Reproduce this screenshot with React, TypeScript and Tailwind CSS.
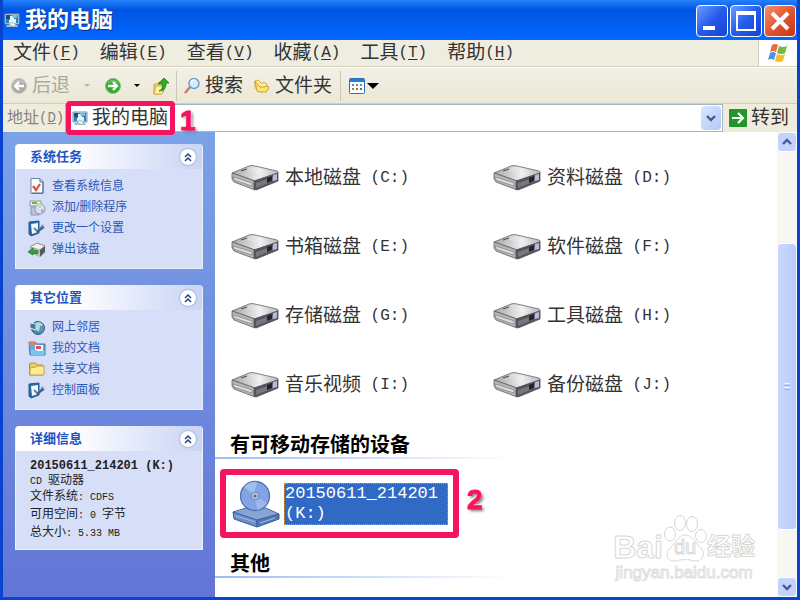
import type { ReactNode } from "react"

const menus = [
  { label: "文件", hotkey: "F" },
  { label: "编辑", hotkey: "E" },
  { label: "查看", hotkey: "V" },
  { label: "收藏", hotkey: "A" },
  { label: "工具", hotkey: "T" },
  { label: "帮助", hotkey: "H" },
]

const drives = [
  { name: "本地磁盘", letter: "C" },
  { name: "资料磁盘", letter: "D" },
  { name: "书箱磁盘", letter: "E" },
  { name: "软件磁盘", letter: "F" },
  { name: "存储磁盘", letter: "G" },
  { name: "工具磁盘", letter: "H" },
  { name: "音乐视频", letter: "I" },
  { name: "备份磁盘", letter: "J" },
]

const tasks = [
  { label: "查看系统信息", icon: <InfoIcon /> },
  { label: "添加/删除程序", icon: <ProgramsIcon /> },
  { label: "更改一个设置", icon: <SettingsIcon /> },
  { label: "弹出该盘", icon: <EjectIcon /> },
]

const places = [
  { label: "网上邻居", icon: <NetworkIcon /> },
  { label: "我的文档", icon: <DocumentsIcon /> },
  { label: "共享文档", icon: <FolderIcon /> },
  { label: "控制面板", icon: <SettingsIcon /> },
]

function ComputerIcon() {
  return (
    <svg viewBox="0 0 16 16" className="size-4 shrink-0">
      <path d="M1 2h14v10H1z" fill="#d9e5ee" stroke="#7591a5" />
      <path d="M2 3h12v8H2z" fill="#2a83b8" />
      <path d="M2 3h4v4H2z" fill="#174e7e" />
      <path d="M6 4h4v3h2v4H5V8h1z" fill="#e4f6fc" />
      <path d="M8 3h5v3H9z" fill="#64c5e8" />
      <path d="M3 13h10l1 2H2z" fill="#acc0cd" />
      <path d="m7 10 5 2-2 3-5-2z" fill="#e8eef0" stroke="#718a96" strokeWidth=".5" />
    </svg>
  )
}

function RoundArrow({ direction }: { direction: "left" | "right" }) {
  const back = direction === "left"
  return (
    <svg viewBox="0 0 18 18" className="size-[18px] shrink-0">
      <circle cx="9" cy="9" r="7.5" fill={back ? "#aaaaa7" : "#34a92c"} stroke={back ? "#c9c8c4" : "#82c377"} />
      <path d="M3 7a6.5 6.5 0 0 1 12 0Q9 3 3 7" fill="#fff" opacity=".3" />
      <path d={back ? "M14 9H5m4-4L5 9l4 4" : "M4 9h9M9 5l4 4-4 4"} fill="none" stroke="#fff" strokeWidth="2.4" />
    </svg>
  )
}

function UpFolderIcon() {
  return (
    <svg viewBox="0 0 18 18" className="size-[18px]">
      <path d="M2 7h4l1-2 5 1v8l-3 3H2z" fill="#f3db6d" stroke="#c9a540" />
      <path d="M4 9h9l-3 8H2z" fill="#fff3a6" stroke="#d3ad41" />
      <path d="M7 14c3-1 4-4 3-7H6l6-6 5 5h-3c0 5-2 8-7 8" fill="#36a91d" stroke="#157a20" strokeWidth=".8" />
    </svg>
  )
}

function SearchIcon() {
  return (
    <svg viewBox="0 0 18 18" className="size-[18px]">
      <path d="m2 16 5-6" stroke="#c5816e" strokeWidth="2.5" />
      <circle cx="11" cy="6.5" r="5" fill="#cdefff" stroke="#6b9ac8" strokeWidth="1.4" />
      <path d="M8 6c0-2 2-3 4-3" fill="none" stroke="#fff" strokeWidth="1.5" />
    </svg>
  )
}

function FolderIcon() {
  return (
    <svg viewBox="0 0 18 18" className="size-[18px] shrink-0">
      <path d="M1.5 15V4l1-1h5l2 2h5l1 2v8z" fill="#f2cd5b" stroke="#b58b30" />
      <path d="M2 15V8l6-1 1-1h7v8l-1 1z" fill="#ffec90" stroke="#d0a13b" />
    </svg>
  )
}

function OpenFolderIcon() {
  return (
    <svg viewBox="0 0 18 18" className="size-[18px]">
      <path d="M2 12V4l3-1 3 3h5l1 3" fill="#fff2a3" stroke="#d4a83b" />
      <path d="m2 4 2 10 3 1h6l3-4-1-2-4 1H7z" fill="#ffe371" stroke="#cf9b2d" />
    </svg>
  )
}

function ViewsIcon() {
  return (
    <svg viewBox="0 0 16 16" className="size-4">
      <rect x=".5" y=".5" width="15" height="15" rx="1" fill="#fff" stroke="#276fbb" />
      <path d="M1 1h14v3H1z" fill="#277bd8" />
      <path d="M3 6h2v2H3zm4 0h2v2H7z" fill="#6287c1" />
      <path d="M11 6h2v2h-2zm-8 4h2v2H3z" fill="#619d56" />
      <path d="M7 10h2v2H7z" fill="#cb5b44" />
      <path d="M11 10h2v2h-2z" fill="#4f69b5" />
    </svg>
  )
}

function WindowsFlag() {
  return (
    <svg viewBox="0 0 22 20" className="h-5 w-[22px]">
      <path d="M5 2q4-2 6 0L9 9Q6 7 3 9z" fill="#ee6b36" />
      <path d="M12 3q4 2 8 0l-2 7q-4 2-8 0z" fill="#76b840" />
      <path d="M3 10q3-2 6 0l-2 7q-3-2-6 0z" fill="#4f91db" />
      <path d="M10 11q4 2 8 0l-2 7q-4 2-8 0z" fill="#f5be2e" />
    </svg>
  )
}

function InfoIcon() {
  return (
    <svg viewBox="0 0 18 18" className="size-[18px] shrink-0">
      <path d="M3 1.5h9l3 3v12H3z" fill="#fafdff" stroke="#7183a4" />
      <path d="M12 2v3h3v11H4" fill="none" stroke="#53678b" />
      <path d="m5 9 3 4 4-6" fill="none" stroke="#dc5136" strokeWidth="2.2" />
    </svg>
  )
}

function ProgramsIcon() {
  return (
    <svg viewBox="0 0 18 18" className="size-[18px] shrink-0">
      <path d="M2 3h11v5H2z" fill="#e9f0ed" stroke="#8998a3" />
      <path d="M4 5h5" stroke="#6faa55" strokeWidth="2" />
      <path d="M3 9h8v8H3z" fill="#b7c5dc" stroke="#8197ba" />
      <circle cx="12" cy="11" r="5" fill="#dce3ee" stroke="#8996ac" />
      <path d="m12 11-3-4a5 5 0 0 1 5-1z" fill="#c8e2af" />
      <path d="m12 11 5 1a5 5 0 0 1-3 4z" fill="#b4a2d3" />
      <circle cx="12" cy="11" r="1.5" fill="#fff" stroke="#9da4b4" strokeWidth=".5" />
    </svg>
  )
}

function SettingsIcon() {
  return (
    <svg viewBox="0 0 18 18" className="size-[18px] shrink-0">
      <path d="m1 3 10-1v12l-8 3-2-2z" fill="#2c68a5" stroke="#285888" />
      <path d="m3 5 7-1v9l-6 2z" fill="#edf8ff" />
      <path d="m6 9 3 3 3-2 3-4" fill="none" stroke="#6187bb" strokeWidth="2" />
      <path d="m9 13 7-5" stroke="#415b86" strokeWidth="2" />
    </svg>
  )
}

function EjectIcon() {
  return (
    <svg viewBox="0 0 18 18" className="size-[18px] shrink-0">
      <path d="m2 7 7-4 8 3-5 4z" fill="#f2f2ee" stroke="#686969" strokeWidth=".7" />
      <path d="m2 7 10 3v7L2 13z" fill="#b7bab6" />
      <path d="m12 10 5-4v6l-5 5z" fill="#555b59" />
      <path d="m0 12 5-4v2l5 1-1 3-4-1v2z" fill="#31a344" stroke="#176b2a" strokeWidth=".7" />
    </svg>
  )
}

function NetworkIcon() {
  return (
    <svg viewBox="0 0 18 18" className="size-[18px] shrink-0">
      <circle cx="10" cy="10" r="6.5" fill="#418ab1" stroke="#335e82" />
      <path d="M8 5q4-3 7 2l-3 2-1 5-4-3z" fill="#b0d6de" />
      <path d="m2 5 6 1v6l-6-2z" fill="#487796" stroke="#d4e3ea" />
      <path d="M12 8h4l-1 5-3 1z" fill="#6097b7" />
    </svg>
  )
}

function DocumentsIcon() {
  return (
    <svg viewBox="0 0 18 18" className="size-[18px] shrink-0">
      <path d="M1 3h6l2 2h8v11H2z" fill="#66a9dc" stroke="#417ca8" />
      <path d="M1 3h6v3H1z" fill="#d98571" />
      <path d="M7 6h8v6H7z" fill="#eff9ff" />
      <path d="M8 7h5v3H8z" fill="#df514e" />
      <path d="m3 10 5 1 2 1h7l-1 4H3z" fill="#79c4ec" />
    </svg>
  )
}

function DriveIcon() {
  return (
    <svg viewBox="0 0 48 28" className="h-7 w-12 shrink-0">
      <defs>
        <linearGradient id="driveTop">
          <stop stopColor="#a6a6a9" />
          <stop offset=".6" stopColor="#eeeeef" />
          <stop offset="1" stopColor="#b6b6ba" />
        </linearGradient>
      </defs>
      <path d="M1 9 18 2q3-1 6 0l22 5q2 1 1 2l-23 8z" fill="url(#driveTop)" stroke="#656568" strokeWidth=".8" />
      <path d="m1 9 23 8v9L3 18l-2-3z" fill="#b5b5b8" stroke="#626265" strokeWidth=".8" />
      <path d="m23 17 24-8v8l-22 9-2-1z" fill="#55545a" stroke="#505056" strokeWidth=".8" />
      <path d="m25 19 20-7v4l-20 8z" fill="#77777e" />
      <path d="m2 13 19 6v3L3 16z" fill="#e1e1e3" stroke="#747477" strokeWidth=".6" />
      <path d="m36 14 5-2v5l-5 2z" fill="#222232" />
      <path d="m42 11 4-1v6l-4 1z" fill="#b8b9df" />
      <path d="m10 7 6-2" stroke="#505050" strokeWidth="1.3" />
      <path d="m18 4 19 5M16 6l20 5" stroke="#fff" opacity=".35" />
    </svg>
  )
}

function DiscDriveIcon() {
  return (
    <svg viewBox="0 0 48 50" className="h-[50px] w-12 shrink-0">
      <path d="m1 33 13-4h20l13 6-22 7z" fill="#86a5d6" stroke="#4a6da6" />
      <path d="m1 33 24 8v7L2 40z" fill="#6b8fc7" stroke="#3f6096" />
      <path d="m25 41 22-6v5l-22 8z" fill="#507ab4" stroke="#3a5d90" />
      <path d="m4 37 19 6m5 1 15-5" stroke="#9bb9e2" strokeWidth="1.3" />
      <circle cx="23" cy="17" r="14.5" fill="#83a4e3" stroke="#4f72b3" strokeWidth="1.3" />
      <path d="M22 16 12 8q5-6 13-5z" fill="#a5c5f0" opacity=".8" />
      <path d="m23 17 12 7q-4 6-10 7z" fill="#a6c0ed" opacity=".7" />
      <circle cx="23" cy="17" r="4" fill="#afc6ef" stroke="#6d85b8" />
      <circle cx="23" cy="17" r="1.6" fill="#5e6d89" />
    </svg>
  )
}

function Chevron({ up = false }: { up?: boolean }) {
  return (
    <svg viewBox="0 0 10 8" className="h-2 w-2.5">
      <path d={up ? "m1 6 4-4 4 4" : "m1 2 4 4 4-4"} fill="none" stroke="#435b91" strokeWidth="2.4" />
    </svg>
  )
}

function TaskPanel({ title, children }: { title: string; children: ReactNode }) {
  return (
    <section className="overflow-hidden rounded-t border border-t-0 border-[#edf0fb] bg-[#d6dff7]">
      <header className="flex h-[25px] items-center justify-between bg-linear-to-r from-white from-30% to-[#c9d4f5] pr-1.5 pl-3.5">
        <h2 className="text-[13px] leading-4 font-bold text-[#2155c4]">{title}</h2>
        <button aria-label={`折叠${title}`} className="grid size-4 place-items-center rounded-full bg-white shadow-[0_0_2px_#627bad]">
          <svg viewBox="0 0 10 10" className="size-2.5">
            <path d="m2 5 3-3 3 3M2 9l3-3 3 3" fill="none" stroke="#273e87" strokeWidth="1.5" />
          </svg>
        </button>
      </header>
      {children}
    </section>
  )
}

function LinkList({ items }: { items: { label: string; icon: ReactNode }[] }) {
  return (
    <ul className="px-3 pt-1.5 pb-[9px]">
      {items.map((item) => (
        <li key={item.label}>
          <a href="#" className="flex h-[21px] items-center gap-1.5 text-xs text-[#2d57b8]">
            {item.icon}
            {item.label}
          </a>
        </li>
      ))}
    </ul>
  )
}

function Latin({ children }: { children: ReactNode }) {
  return <span className="font-['Liberation_Mono',monospace] text-[10px] leading-none">{children}</span>
}

function GroupHeading({ children }: { children: ReactNode }) {
  return (
    <div>
      <h2 className="pl-[15px] text-xl leading-6 font-bold text-black">{children}</h2>
      <div className="h-0.5 w-[300px] bg-linear-to-r from-[#9dbcf1] to-white" />
    </div>
  )
}

function StepNumber({ children }: { children: ReactNode }) {
  return (
    <span className="font-['Liberation_Sans',sans-serif] text-[28px] leading-8 font-bold text-[#f5145f] [-webkit-text-stroke:1px_#f5145f] [text-shadow:-1px_-1px_#fff,1px_-1px_#fff,2px_2px_3px_#777]">
      {children}
    </span>
  )
}

function Watermark() {
  return (
    <div className="pointer-events-none absolute right-[22px] bottom-3.5 flex flex-col items-center font-['Liberation_Sans','Noto_Sans_CJK_SC',sans-serif] text-white">
      <div className="flex h-[50px] items-end [-webkit-text-stroke:1px_#d8d8d8]">
        <span className="text-[32px] leading-8 font-bold">Bai</span>
        <span className="relative grid h-12 w-11 place-items-center">
          <svg viewBox="0 0 44 48" className="absolute size-full" fill="#fff" stroke="#d8d8d8">
            <ellipse cx="7" cy="19" rx="5.5" ry="7" />
            <ellipse cx="17" cy="8" rx="5.5" ry="7.5" />
            <ellipse cx="29" cy="9" rx="5.5" ry="7.5" />
            <ellipse cx="38" cy="21" rx="5.5" ry="6.5" />
            <path d="M22 20c-7 0-9 8-15 13-6 7-2 14 6 13 7-2 12-2 18 0 9 1 12-7 7-13-6-5-8-13-16-13z" />
          </svg>
          <span className="relative pt-4 text-xl leading-6">du</span>
        </span>
        <span className="text-2xl leading-8 font-bold">经验</span>
      </div>
      <span className="text-[17px] leading-5 [-webkit-text-stroke:1px_#dedede]">jingyan.baidu.com</span>
    </div>
  )
}

export default function App() {
  return (
    <div className="flex h-screen flex-col overflow-hidden border-x-[3px] border-b-[3px] border-[#0844cf] bg-white font-['Liberation_Sans','Noto_Sans_CJK_SC',sans-serif] text-[#333]">
      <header className="flex h-10 shrink-0 items-center bg-linear-to-b from-[#2481fa] via-[#0054e3] via-25% to-[#0468ff] pr-px pl-px">
        <ComputerIcon />
        <h1 className="ml-[5px] flex-1 text-[22px] leading-8 font-bold text-white [text-shadow:1px_1px_#08317f]">我的电脑</h1>
        <div className="flex gap-0.5 pt-0.5">
          <button aria-label="最小化" className="flex size-8 items-end rounded border border-white bg-linear-to-br from-[#6f9aff] via-[#245bec] to-[#1742cf] p-1.5">
            <span className="h-1 w-3 bg-white" />
          </button>
          <button aria-label="最大化" className="grid size-8 place-items-center rounded border border-white bg-linear-to-br from-[#6f9aff] via-[#245bec] to-[#1742cf]">
            <span className="size-5 border-2 border-t-4 border-white" />
          </button>
          <button aria-label="关闭" className="grid size-8 place-items-center rounded border border-white bg-linear-to-br from-[#f3906b] via-[#e35432] to-[#c83713]">
            <svg viewBox="0 0 20 20" className="size-5">
              <path d="m2 2 16 16M18 2 2 18" stroke="#fff" strokeWidth="4" />
            </svg>
          </button>
        </div>
      </header>

      <nav className="flex h-[27px] shrink-0 items-center justify-between border-b border-[#d6d2bd] bg-[#efeddf]">
        <div className="flex gap-5 pl-2.5">
          {menus.map((menu) => (
            <button key={menu.label} className="flex items-center text-[19px] leading-6">
              {menu.label}
              <span className="font-['Liberation_Mono',monospace] text-base leading-6">
                (<u className="underline-offset-2">{menu.hotkey}</u>)
              </span>
            </button>
          ))}
        </div>
        <div className="grid h-full w-[39px] place-items-center border-l border-[#d1cebd] bg-white">
          <WindowsFlag />
        </div>
      </nav>

      <div className="flex h-[37px] shrink-0 items-center border-t border-b border-t-white border-b-[#d2cebd] bg-linear-to-b from-[#f2f0e6] to-[#ebe8d6] pl-[7px] text-[19px] leading-6">
        <button className="flex items-center gap-1 text-[#aaa99f]">
          <RoundArrow direction="left" />
          后退
        </button>
        <span className="ml-3.5 border-x-[3px] border-t-[3px] border-x-transparent border-t-[#bbb9ae]" />
        <button aria-label="前进" className="ml-3.5">
          <RoundArrow direction="right" />
        </button>
        <span className="ml-3 border-x-[3px] border-t-[3px] border-x-transparent border-t-black" />
        <button aria-label="向上" className="ml-3">
          <UpFolderIcon />
        </button>
        <span className="mx-1.5 h-[30px] border-l border-[#cbc8b8]" />
        <button className="flex items-center gap-1">
          <SearchIcon />
          搜索
        </button>
        <button className="ml-2.5 flex items-center gap-1">
          <OpenFolderIcon />
          文件夹
        </button>
        <span className="mx-2 h-[30px] border-l border-[#cbc8b8]" />
        <button aria-label="查看方式" className="flex items-center gap-0.5">
          <ViewsIcon />
          <span className="border-x-[6px] border-t-[6px] border-x-transparent border-t-black" />
        </button>
      </div>

      <div className="flex h-7 shrink-0 items-center bg-[#efecdc] text-[19px]">
        <label htmlFor="address" className="flex w-[62px] shrink-0 items-center pl-1 text-base leading-6 text-[#85847e]">
          地址<span className="font-['Liberation_Mono',monospace] text-sm">(<u>D</u>)</span>
        </label>
        <div className="relative flex h-full flex-1 items-center border border-[#a5b6c6] bg-white pl-1.5">
          <ComputerIcon />
          <input id="address" defaultValue="我的电脑" className="ml-1 min-w-0 flex-1 bg-transparent text-[19px] leading-6 outline-none" />
          <button aria-label="展开地址" className="mr-px grid h-6 w-5 place-items-center rounded-sm bg-linear-to-br from-[#dce6fe] to-[#b3c7f7]">
            <Chevron />
          </button>
          <div className="pointer-events-none absolute -top-1 left-0 z-10 h-[34px] w-[109px] rounded-sm border-[5px] border-[#f5145f]" />
          <div className="pointer-events-none absolute top-0 left-[114px] z-10">
            <StepNumber>1</StepNumber>
          </div>
        </div>
        <button className="flex items-center gap-1 pr-2 pl-1.5 leading-6">
          <svg viewBox="0 0 18 18" className="size-[18px]">
            <rect width="18" height="18" rx="1" fill="#23962b" />
            <path d="M3 9h11M9 4l5 5-5 5" fill="none" stroke="#fff" strokeWidth="2.2" />
          </svg>
          转到
        </button>
      </div>

      <div className="flex min-h-0 flex-1">
        <aside className="flex w-[212px] shrink-0 flex-col gap-4 bg-linear-to-b from-[#7ba2e7] to-[#6375d6] px-3 pt-3">
          <TaskPanel title="系统任务">
            <LinkList items={tasks} />
          </TaskPanel>
          <TaskPanel title="其它位置">
            <LinkList items={places} />
          </TaskPanel>
          <TaskPanel title="详细信息">
            <div className="px-3.5 py-2 text-xs leading-[18px] text-[#222]">
              <p className="font-['Liberation_Mono',monospace] leading-[14px] font-bold whitespace-nowrap">20150611_214201 (K:)</p>
              <p className="leading-[14px]"><Latin>CD </Latin>驱动器</p>
              <p>文件系统<Latin>: CDFS</Latin></p>
              <p>可用空间<Latin>: 0 </Latin>字节</p>
              <p>总大小<Latin>: 5.33 MB</Latin></p>
            </div>
          </TaskPanel>
        </aside>

        <main className="relative min-w-0 flex-1 overflow-hidden pt-[11px]">
          <ul className="grid grid-cols-[262px_1fr] pl-4">
            {drives.map((drive) => (
              <li key={drive.letter} className="flex h-[69px] items-center gap-1.5 text-[19px] leading-6">
                <DriveIcon />
                <span className="flex items-center">
                  {drive.name}
                  <span className="font-['Liberation_Mono',monospace] text-base whitespace-pre"> ({drive.letter}:)</span>
                </span>
              </li>
            ))}
          </ul>
          <div className="pt-3.5">
            <GroupHeading>有可移动存储的设备</GroupHeading>
          </div>
          <div className="mt-2.5 ml-[5px] flex items-center gap-2">
            <div className="flex h-[69px] w-[239px] items-center gap-1 rounded-sm border-[6px] border-[#f5145f] pl-1.5">
              <DiscDriveIcon />
              <button className="h-[42px] w-[164px] border border-dotted border-[#d09845] bg-[#316ac5] text-left font-['Liberation_Mono',monospace] text-[17px] leading-5 text-white">
                20150611_214201 (K:)
              </button>
            </div>
            <div className="pb-2">
              <StepNumber>2</StepNumber>
            </div>
          </div>
          <div className="mt-3.5">
            <GroupHeading>其他</GroupHeading>
          </div>
          <Watermark />
        </main>

        <div className="flex w-5 shrink-0 flex-col bg-[#f7f6f0]">
          <button aria-label="向上滚动" className="grid h-5 place-items-center rounded-sm border border-white bg-[#c4d3fc]">
            <Chevron up />
          </button>
          <div className="flex flex-1 flex-col">
            <div className="flex-[91]" />
            <div className="grid flex-[286] place-items-center rounded-sm border border-white bg-linear-to-r from-[#cad8ff] to-[#b9cbfa]">
              <span className="grid gap-px">
                <span className="h-px w-1.5 bg-[#eef3ff]" />
                <span className="h-px w-1.5 bg-[#9db4ea]" />
                <span className="h-px w-1.5 bg-[#eef3ff]" />
                <span className="h-px w-1.5 bg-[#9db4ea]" />
              </span>
            </div>
            <div className="flex-[47]" />
          </div>
          <button aria-label="向下滚动" className="grid h-5 place-items-center rounded-sm border border-white bg-[#c4d3fc]">
            <Chevron />
          </button>
        </div>
      </div>
    </div>
  )
}
